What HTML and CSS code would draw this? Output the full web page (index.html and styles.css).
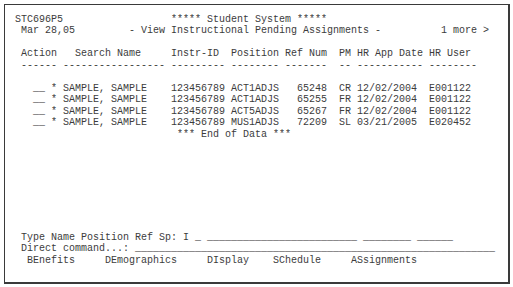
FILE: index.html
```html
<!DOCTYPE html>
<html lang="en">
<head>
  <meta charset="UTF-8">
  <meta name="viewport" content="width=device-width, initial-scale=1.0">
  <title>STC696P5 - Student System</title>
  <link rel="stylesheet" href="styles.css">
</head>
<body>
  <div class="screen">
<pre class="terminal">STC696P5                  ***** Student System *****
 Mar 28,05         - View Instructional Pending Assignments -          1 more &gt;

 Action   Search Name     Instr-ID  Position Ref Num  PM HR App Date HR User
 ------ ----------------- --------- -------- -------  -- ----------- --------

   __ * SAMPLE, SAMPLE    123456789 ACT1ADJS   65248  CR 12/02/2004  E001122
   __ * SAMPLE, SAMPLE    123456789 ACT1ADJS   65255  FR 12/02/2004  E001122
   __ * SAMPLE, SAMPLE    123456789 ACT5ADJS   65267  FR 12/02/2004  E001122
   __ * SAMPLE, SAMPLE    123456789 MUS1ADJS   72209  SL 03/21/2005  E020452
                           *** End of Data ***








 Type Name Position Ref Sp: I _ _________________________ ________ ______
 Direct command...: ____________________________________________________________
  BEnefits     DEmographics     DIsplay    SChedule     ASsignments</pre>
  </div>
</body>
</html>
```

FILE: styles.css
```css
/* Page */
body {
  margin: 0;
  padding: 4px 0 0 4px;
  background: #fff;
  overflow: hidden;
}

/* Terminal frame */
.screen {
  width: 503px;
  height: 277px;
  border: 1px solid #3a3a3a;
  border-right-width: 2px;
  border-bottom-width: 2px;
  background: #fff;
}

.terminal {
  margin: 0;
  padding: 9px 0 0 10px;
  font-family: "Liberation Mono", "Courier New", monospace;
  font-size: 10px;
  line-height: 11.45px;
  color: #3c3c3c;
}
```
